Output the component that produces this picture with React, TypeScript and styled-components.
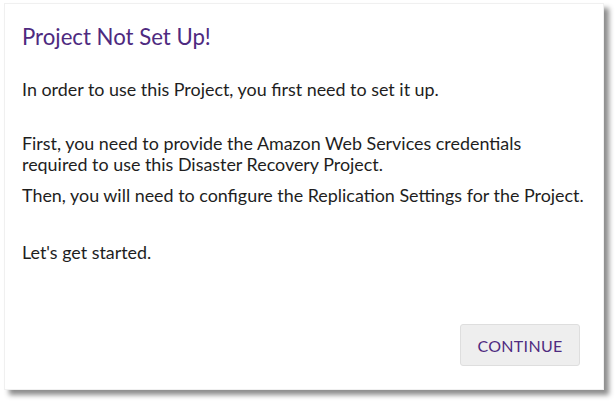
import React from "react";
import styled, { createGlobalStyle } from "styled-components";

const Global = createGlobalStyle`
  html, body { margin: 0; padding: 0; background: #ffffff; }
  body { font-family: Lato, "Noto Sans", sans-serif; }
`;

const Page = styled.div`
  width: 616px;
  height: 403px;
  padding: 3px 0 0 4px;
  box-sizing: border-box;
`;

const Dialog = styled.div`
  width: 600px;
  height: 387px;
  box-sizing: border-box;
  background: #ffffff;
  border: 1px solid #f0f0f0;
  box-shadow: 5px 5px 5px rgba(0, 0, 0, 0.45);
  padding: 20px 10px 23px 17px;
  display: flex;
  flex-direction: column;
`;

const Title = styled.h2`
  margin: 0;
  font-size: 22.2px;
  font-weight: 400;
  color: #4e2a80;
  line-height: 26px;
`;

const Body = styled.div`
  margin-top: 29px;
  flex: 1;
  color: #1e1e1e;
  font-size: 17.9px;
  line-height: 21px;
  white-space: nowrap;
`;

const Para = styled.p<{ $gap?: number }>`
  margin: ${(p) => p.$gap ?? 0}px 0 0 0;
`;

const Footer = styled.div`
  display: flex;
  justify-content: flex-end;
  padding-right: 13px;
`;

const Button = styled.button`
  width: 120px;
  height: 42px;
  background: #eeeeee;
  border: 1px solid #dedede;
  border-radius: 3px;
  color: #4e2a80;
  font-family: Lato, "Noto Sans", sans-serif;
  font-size: 16px;
  letter-spacing: 0.3px;
  cursor: pointer;
`;

export default function App() {
  return (
    <>
      <Global />
      <Page>
        <Dialog>
          <Title>Project Not Set Up!</Title>
          <Body>
            <Para>In order to use this Project, you first need to set it up.</Para>
            <Para $gap={33}>
              First, you need to provide the Amazon Web Services credentials
              <br />
              required to use this Disaster Recovery Project.
            </Para>
            <Para $gap={10}>
              Then, you will need to configure the Replication Settings for the Project.
            </Para>
            <Para $gap={36}>Let's get started.</Para>
          </Body>
          <Footer>
            <Button>CONTINUE</Button>
          </Footer>
        </Dialog>
      </Page>
    </>
  );
}
